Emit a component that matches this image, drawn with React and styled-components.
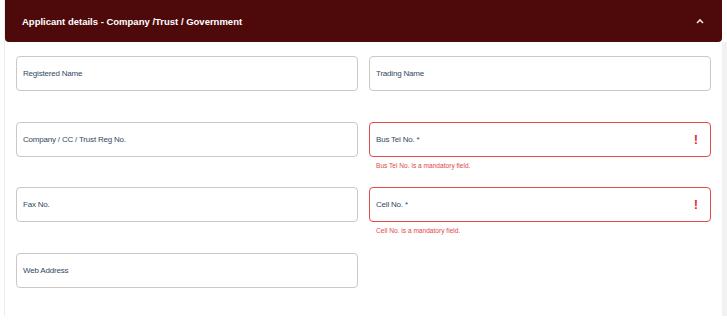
import React from "react";
import styled, { createGlobalStyle } from "styled-components";

const Global = createGlobalStyle`
  html, body { margin: 0; padding: 0; background: #ffffff; }
  body { font-family: "Liberation Sans", Arial, sans-serif; }
  * { box-sizing: border-box; }
`;

const Page = styled.div`
  display: flex;
  width: 727px;
  height: 325px;
  padding-left: 4px;
`;

const Card = styled.section`
  flex: 1;
  display: flex;
  flex-direction: column;
  align-self: flex-start;
  height: 316px;
  border-left: 1px solid #ececec;
`;

const Header = styled.header`
  height: 42px;
  flex: none;
  background: #4e0a0b;
  border-radius: 0 0 4px 4px;
  display: flex;
  align-items: center;
  justify-content: space-between;
  padding: 0 18px 0 17px;
`;

const Title = styled.h2`
  margin: 0;
  color: #ffffff;
  font-size: 9.5px;
  font-weight: 700;
`;

const Caret = styled.svg`
  width: 8px;
  height: 6px;
  display: block;
`;

const Body = styled.div`
  display: grid;
  grid-template-columns: 342px 342px;
  column-gap: 11px;
  padding: 14px 11px 0 11px;
  grid-auto-rows: 65.7px;
`;

const Field = styled.div`
  display: flex;
  flex-direction: column;
`;

const InputBox = styled.div`
  height: 35px;
  border: ${(p) => (p.$error ? "1.5px solid #e24b4b" : "1px solid #c9c9c9")};
  border-radius: 4px;
  display: flex;
  align-items: center;
  justify-content: space-between;
  padding: 0 12px 0 6px;
  background: #fff;
`;

const Label = styled.span`
  font-size: 8px;
  letter-spacing: -0.2px;
  color: #334a62;
`;

const Bang = styled.span`
  color: #e03333;
  font-size: 13px;
  font-weight: 700;
  line-height: 1;
`;

const Error = styled.div`
  margin-top: 5px;
  padding-left: 7px;
  font-size: 6.6px;
  color: #e24848;
`;

const Scroll = styled.div`
  width: 5px;
  margin-top: 42px;
  height: 274px;
  background: #f1f1f1;
`;

const fields = [
  { label: "Registered Name" },
  { label: "Trading Name" },
  { label: "Company / CC / Trust Reg No." },
  { label: "Bus Tel No. *", error: "Bus Tel No. is a mandatory field." },
  { label: "Fax No." },
  { label: "Cell No. *", error: "Cell No. is a mandatory field." },
  { label: "Web Address" },
];

export default function App() {
  return (
    <>
      <Global />
      <Page>
        <Card>
          <Header>
            <Title>Applicant details - Company /Trust / Government</Title>
            <Caret viewBox="0 0 8 6">
              <path d="M1 5 L4 2 L7 5" fill="none" stroke="#f6dede" strokeWidth="1.6" />
            </Caret>
          </Header>
          <Body>
            {fields.map((f) => (
              <Field key={f.label}>
                <InputBox $error={!!f.error}>
                  <Label>{f.label}</Label>
                  {f.error && <Bang>!</Bang>}
                </InputBox>
                {f.error && <Error>{f.error}</Error>}
              </Field>
            ))}
          </Body>
        </Card>
        <Scroll />
      </Page>
    </>
  );
}
